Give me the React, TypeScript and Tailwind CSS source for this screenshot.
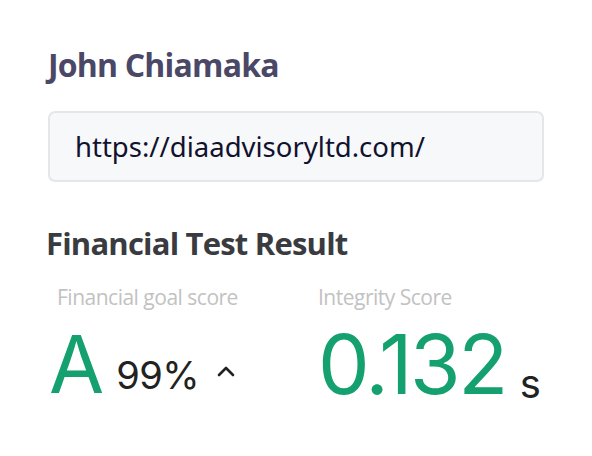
import { FC } from "react"

const Score: FC<{ label: string; className?: string; children: React.ReactNode }> = ({ label, className, children }) => {
  return (
    <div className={`flex flex-col ${className || ""}`}>
      <p className="font-['Open_Sans',sans-serif] text-[21px] font-normal leading-[26px] tracking-[-0.5px] text-[#c2c2c2]">
        {label}
      </p>
      <div className="mt-[14px] flex items-end font-['Inter',sans-serif] leading-none">{children}</div>
    </div>
  )
}

export default function App() {
  return (
    <div className="h-[456px] w-[592px] bg-white px-[48px] pt-[44px]">
      <h1 className="font-['Open_Sans',sans-serif] text-[32px] font-bold leading-[42px] tracking-[-0.8px] text-[#4a4866]">
        John Chiamaka
      </h1>
      <div className="mt-[25px] flex h-[71px] w-[496px] items-center rounded-[7px] border-2 border-[#e4e6ea] bg-[#f7f8fa] px-[25px]">
        <span className="font-['Noto_Sans',sans-serif] text-[27.5px] text-[#11122e]">https://diaadvisoryltd.com/</span>
      </div>
      <h2 className="-ml-[2px] mt-[42px] font-['Open_Sans',sans-serif] text-[31px] font-bold leading-[38px] tracking-[-0.8px] text-[#3a3b40]">
        Financial Test Result
      </h2>
      <div className="mt-[22px] flex">
        <Score label="Financial goal score" className="ml-[9px] w-[261px]">
          <span className="-ml-[8px] text-[80px] font-normal text-[#14a06f]">A</span>
          <span className="mb-[10px] ml-[12px] text-[38px] tracking-[-0.5px] text-[#222]">99%</span>
          <svg width="20" height="12" viewBox="0 0 20 12" className="mb-[27px] ml-[17px]" fill="none">
            <path d="M3 10 L10 3 L17 10" stroke="#222" strokeWidth="2.6" strokeLinecap="round" strokeLinejoin="round" />
          </svg>
        </Score>
        <Score label="Integrity Score">
          <span className="text-[82px] font-normal tracking-[-2.5px] text-[#14a06f]">0.132</span>
          <span className="mb-[2px] ml-[14px] text-[40px] text-[#222]">s</span>
        </Score>
      </div>
    </div>
  )
}
